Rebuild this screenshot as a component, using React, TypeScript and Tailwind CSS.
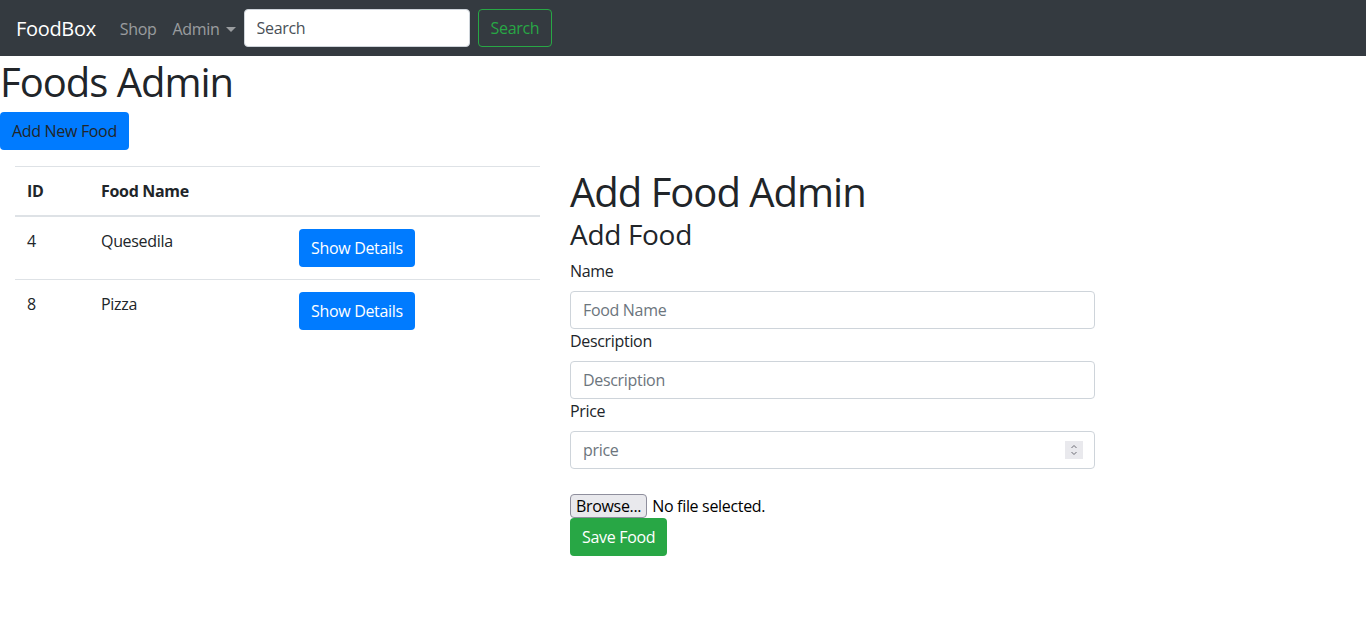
import React from "react";

const foods = [
  { id: 4, name: "Quesedila" },
  { id: 8, name: "Pizza" },
];

function Navbar() {
  return (
    <nav className="h-[56px] bg-[#343a40] flex items-center px-4">
      <span className="text-[20px] leading-[30px] text-white mr-4 relative top-[1px]">FoodBox</span>
      <a className="px-2 text-[16px] leading-6 text-white/50 relative top-[1px]">Shop</a>
      <a className="px-2 text-[16px] leading-6 text-white/50 flex items-center relative top-[1px]">
        Admin
        <span className="ml-[6px] inline-block w-0 h-0 border-x-[5px] border-x-transparent border-t-[5px] border-t-white/50" />
      </a>
      <input
        placeholder="Search"
        className="w-[226px] h-[38px] px-3 rounded-[4px] bg-white border border-[#ced4da] text-[16px] text-[#495057] placeholder:text-[#495057] outline-none"
      />
      <button className="ml-2 h-[38px] px-3 rounded-[4px] border border-[#28a745] text-[#28a745] text-[16px]">
        Search
      </button>
    </nav>
  );
}

function Field({ label, placeholder, spinner }: { label: string; placeholder: string; spinner?: boolean }) {
  return (
    <div>
      <label className="block text-[16px] leading-6 mb-2">{label}</label>
      <div className="relative">
        <input
          placeholder={placeholder}
          className="w-full h-[38px] px-3 rounded-[4px] border border-[#ced4da] text-[16px] placeholder:text-[#6c757d] outline-none"
        />
        {spinner && (
          <div className="absolute right-[12px] top-[10px] w-[18px] h-[18px] bg-[#e9e9ed] flex flex-col items-center justify-center">
            <svg width="8" height="14" viewBox="0 0 8 14" fill="none" stroke="#6c6c74" strokeWidth="1">
              <path d="M1.5 5 L4 2.5 L6.5 5" />
              <path d="M1.5 9 L4 11.5 L6.5 9" />
            </svg>
          </div>
        )}
      </div>
    </div>
  );
}

export default function App() {
  return (
    <div
      className="min-h-screen bg-white text-[#212529] tracking-[-0.02em]"
      style={{ fontFamily: '"Open Sans", "Noto Sans", sans-serif' }}
    >
      <Navbar />
      <h1 className="text-[40px] leading-[48px] pt-[2px] mb-[6px] tracking-[-0.025em]">Foods Admin</h1>
      <button className="h-[38px] px-3 rounded-[4px] bg-[#007bff] text-[#212529] text-[16px]">Add New Food</button>

      <div className="flex mt-4 w-[1110px]">
        <div className="w-[555px] px-[15px]">
          <table className="w-full border-collapse text-[16px] leading-6">
            <thead>
              <tr>
                <th className="w-[74px] text-left font-bold p-3 border-t border-t-[#dee2e6] border-b-2 border-b-[#dee2e6] align-bottom">ID</th>
                <th className="w-[198px] text-left font-bold p-3 border-t border-t-[#dee2e6] border-b-2 border-b-[#dee2e6] align-bottom">Food Name</th>
                <th className="p-3 border-t border-t-[#dee2e6] border-b-2 border-b-[#dee2e6]" />
              </tr>
            </thead>
            <tbody>
              {foods.map((f, i) => (
                <tr key={f.id}>
                  <td className={`p-3 align-top ${i > 0 ? "border-t border-t-[#dee2e6]" : ""}`}>{f.id}</td>
                  <td className={`p-3 align-top ${i > 0 ? "border-t border-t-[#dee2e6]" : ""}`}>{f.name}</td>
                  <td className={`p-3 align-top ${i > 0 ? "border-t border-t-[#dee2e6]" : ""}`}>
                    <button className="h-[38px] px-3 rounded-[4px] bg-[#007bff] text-white text-[16px]">Show Details</button>
                  </td>
                </tr>
              ))}
            </tbody>
          </table>
        </div>

        <div className="w-[555px] px-[15px]">
          <h1 className="text-[40px] leading-[46px] pt-[3px] tracking-[-0.025em]">Add Food Admin</h1>
          <h3 className="text-[28px] leading-[33px] mt-[3px] mb-2">Add Food</h3>
          <Field label="Name" placeholder="Food Name" />
          <Field label="Description" placeholder="Description" />
          <Field label="Price" placeholder="price" spinner />
          <div className="mt-[25px] flex items-center h-[24px] text-[16px] text-black">
            <span className="h-[24px] px-[5px] flex items-center border border-[#8f8f9d] rounded-[4px] bg-[#e9e9ed] mr-[5px]">
              Browse...
            </span>
            No file selected.
          </div>
          <button className="h-[38px] px-3 rounded-[4px] bg-[#28a745] text-white text-[16px]">Save Food</button>
        </div>
      </div>
    </div>
  );
}
